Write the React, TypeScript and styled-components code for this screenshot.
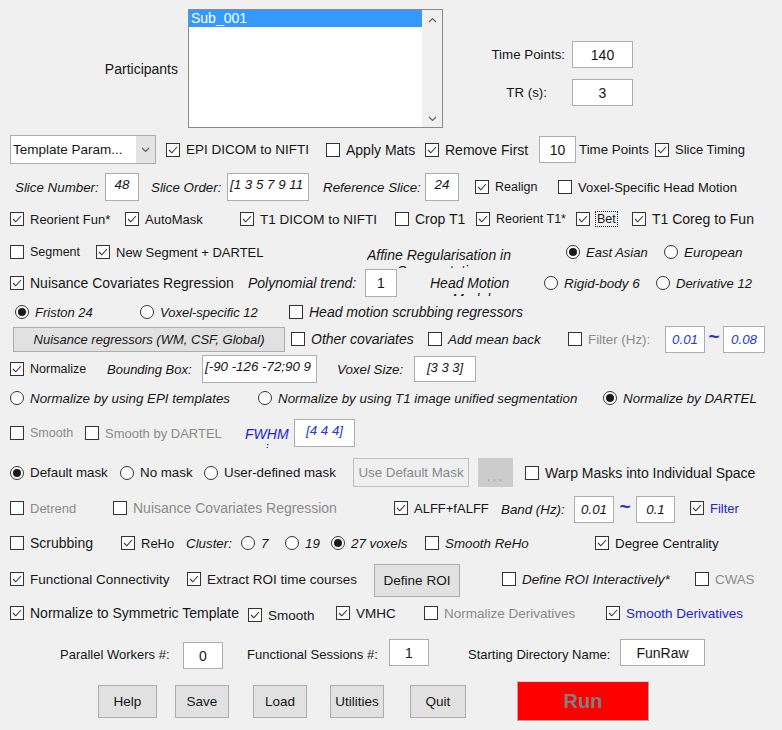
import React from "react";
import styled, { createGlobalStyle } from "styled-components";

const GlobalStyle = createGlobalStyle`
  html, body {
    margin: 0;
    padding: 0;
    background: #f0f0f0;
  }
  body {
    font-family: "Liberation Sans", Arial, sans-serif;
  }
`;

type Tone = "ink" | "muted" | "blue";
const ink: Record<Tone, string> = {
  ink: "#161616",
  muted: "#8a8a8a",
  blue: "#2222d2",
};

const Window = styled.div`
  width: 782px;
  height: 730px;
  overflow: hidden;
  background: #f0f0f0;
  color: #161616;
  font-size: 13.33px;
`;

/* ---------- top block: participants list + time parameters ---------- */

const TopBlock = styled.div`
  display: flex;
  height: 135px;
  box-sizing: border-box;
  padding-top: 9px;
`;

const ParticipantsTag = styled.div`
  width: 188px;
  height: 119px;
  box-sizing: border-box;
  padding-right: 10px;
  display: flex;
  align-items: center;
  justify-content: flex-end;
  font-size: 14px;
`;

const ListBox = styled.div`
  width: 255px;
  height: 119px;
  box-sizing: border-box;
  border: 1px solid #8a8a8a;
  background: #fff;
  display: flex;
`;

const ListItems = styled.div`
  flex: 1;
`;

const ListItem = styled.div<{ $sel?: boolean }>`
  height: 17px;
  line-height: 17px;
  padding-left: 2px;
  font-size: 14px;
  background: ${({ $sel }) => ($sel ? "#3399ff" : "transparent")};
  color: ${({ $sel }) => ($sel ? "#fff" : "#161616")};
`;

const ScrollTrack = styled.div`
  width: 20px;
  background: #f0f0f0;
  display: flex;
  flex-direction: column;
  justify-content: space-between;
  align-items: center;
  padding: 7px 0 5px;
`;

const Params = styled.div`
  display: flex;
  flex-direction: column;
  gap: 11px;
  margin-top: 32px;
`;

const ParamRow = styled.div`
  display: flex;
  align-items: center;
  height: 27px;
`;

const ParamLabel = styled.div<{ $pr: number }>`
  width: 129px;
  box-sizing: border-box;
  padding-right: ${({ $pr }) => $pr}px;
  text-align: right;
  font-size: 13.33px;
`;

/* ---------- generic rows ---------- */

const Row = styled.div<{ $h: number; $mt?: number; $pl?: number }>`
  display: flex;
  align-items: center;
  height: ${({ $h }) => $h}px;
  margin-top: ${({ $mt }) => $mt ?? 0}px;
  padding-left: ${({ $pl }) => $pl ?? 10}px;
`;

const Cell = styled.div<{ $w: number; $dy?: number }>`
  flex: none;
  width: ${({ $w }) => $w}px;
  display: flex;
  align-items: center;
  margin-top: ${({ $dy }) => ($dy ?? 0) * 2}px;
`;

const Caption = styled.span<{
  $w?: number;
  $italic?: boolean;
  $tone?: Tone;
  $size?: number;
}>`
  flex: none;
  width: ${({ $w }) => ($w ? `${$w}px` : "auto")};
  white-space: nowrap;
  color: ${({ $tone }) => ink[$tone ?? "ink"]};
  font-size: ${({ $size }) => $size ?? 13.33}px;
  font-style: ${({ $italic }) => ($italic ? "italic" : "normal")};
`;

/* labels whose second line is cut by the control's height */
const Clipped = styled.div<{ $w: number; $h: number; $mt: number; $tone?: Tone; $size?: number }>`
  flex: none;
  align-self: flex-start;
  width: ${({ $w }) => $w}px;
  height: ${({ $h }) => $h}px;
  margin-top: ${({ $mt }) => $mt}px;
  overflow: hidden;
  line-height: 16px;
  white-space: nowrap;
  font-style: italic;
  font-size: ${({ $size }) => $size ?? 14}px;
  color: ${({ $tone }) => ink[$tone ?? "ink"]};
`;

const ClipLine = styled.div<{ $indent?: number }>`
  padding-left: ${({ $indent }) => $indent ?? 0}px;
`;

const Option = styled.div<{
  $w?: number;
  $tone: Tone;
  $italic?: boolean;
  $size: number;
  $dy: number;
}>`
  flex: none;
  display: flex;
  align-items: center;
  gap: 6px;
  width: ${({ $w }) => ($w ? `${$w}px` : "auto")};
  margin-top: ${({ $dy }) => $dy * 2}px;
  color: ${({ $tone }) => ink[$tone]};
  font-size: ${({ $size }) => $size}px;
  font-style: ${({ $italic }) => ($italic ? "italic" : "normal")};
  white-space: nowrap;
`;

const Mark = styled.span<{ $round?: boolean }>`
  flex: none;
  box-sizing: border-box;
  width: 14px;
  height: 14px;
  background: #fff;
  border: 1px solid #333;
  border-radius: ${({ $round }) => ($round ? "50%" : "0")};
  display: flex;
  align-items: center;
  justify-content: center;
`;

const Dot = styled.span`
  width: 8px;
  height: 8px;
  border-radius: 50%;
  background: #1a1a1a;
`;

const Focus = styled.span`
  outline: 1px dotted #222;
  outline-offset: 0;
  padding: 0 1px;
`;

const Field = styled.div<{
  $w: number;
  $h?: number;
  $italic?: boolean;
  $blue?: boolean;
  $left?: boolean;
  $top?: boolean;
  $size?: number;
}>`
  flex: none;
  box-sizing: border-box;
  width: ${({ $w }) => $w}px;
  height: ${({ $h }) => $h ?? 27}px;
  display: flex;
  align-items: ${({ $top }) => ($top ? "flex-start" : "center")};
  justify-content: ${({ $left }) => ($left ? "flex-start" : "center")};
  padding: ${({ $top }) => ($top ? "3px 2px 0" : "0 2px")};
  background: #fff;
  border: 1px solid #adadad;
  color: ${({ $blue }) => ($blue ? "#2238d8" : "#161616")};
  font-size: ${({ $size }) => $size ?? 14}px;
  font-style: ${({ $italic }) => ($italic ? "italic" : "normal")};
  white-space: nowrap;
  overflow: hidden;
`;

const Tilde = styled.span<{ $w: number }>`
  flex: none;
  width: ${({ $w }) => $w}px;
  text-align: center;
  color: #1f2fd0;
  font-size: 19px;
  font-weight: bold;
  line-height: 1;
  margin-top: -6px;
`;

const Select = styled.div`
  flex: none;
  box-sizing: border-box;
  width: 146px;
  height: 29px;
  display: flex;
  background: #fff;
  border: 1px solid #acacac;
  font-size: 13.5px;
`;

const SelectValue = styled.div`
  flex: 1;
  display: flex;
  align-items: center;
  padding-left: 2px;
  white-space: nowrap;
`;

const SelectArrow = styled.div`
  width: 19px;
  background: #e3e3e3;
  display: flex;
  align-items: center;
  justify-content: center;
`;

const Button = styled.button<{
  $w: number;
  $h: number;
  $italic?: boolean;
  $size?: number;
  $off?: boolean;
}>`
  flex: none;
  box-sizing: border-box;
  width: ${({ $w }) => $w}px;
  height: ${({ $h }) => $h}px;
  margin: 0;
  padding: 0;
  background: ${({ $off }) => ($off ? "#efefef" : "#e1e1e1")};
  border: 1px solid ${({ $off }) => ($off ? "#bfbfbf" : "#adadad")};
  color: ${({ $off }) => ($off ? "#8a8a8a" : "#161616")};
  font-family: inherit;
  font-size: ${({ $size }) => $size ?? 13.5}px;
  font-style: ${({ $italic }) => ($italic ? "italic" : "normal")};
  white-space: nowrap;
`;

const MoreButton = styled.button`
  flex: none;
  box-sizing: border-box;
  width: 35px;
  height: 29px;
  margin: 0;
  padding: 0 0 3px;
  background: #cccccc;
  border: none;
  color: #a3a3a3;
  font-family: inherit;
  font-size: 14px;
  letter-spacing: 2px;
  display: flex;
  align-items: flex-end;
  justify-content: center;
`;

const RunButton = styled.button`
  flex: none;
  box-sizing: border-box;
  width: 132px;
  height: 40px;
  margin: 0;
  padding: 0;
  background: #ff0000;
  border: 1px solid #a8a8a8;
  border-top-color: #d8d8d8;
  color: #7f7f7f;
  font-family: inherit;
  font-size: 20px;
  font-weight: bold;
`;

/* ---------- small drawings ---------- */

const Tick = () => (
  <svg width="12" height="12" viewBox="0 0 12 12">
    <polyline points="2,6 4.8,8.8 10,3" fill="none" stroke="#333" strokeWidth="1.1" />
  </svg>
);

const Chevron = ({ up }: { up?: boolean }) => (
  <svg width="9" height="6" viewBox="0 0 9 6">
    <polyline
      points={up ? "1,5 4.5,1.5 8,5" : "1,1 4.5,4.5 8,1"}
      fill="none"
      stroke="#606060"
      strokeWidth="1.2"
    />
  </svg>
);

type OptProps = {
  label: React.ReactNode;
  on?: boolean;
  w?: number;
  tone?: Tone;
  italic?: boolean;
  size?: number;
  dy?: number;
};

const Check = ({ label, on, w, tone = "ink", italic, size = 13.33, dy = 0 }: OptProps) => (
  <Option $w={w} $tone={tone} $italic={italic} $size={size} $dy={dy}>
    <Mark>{on && <Tick />}</Mark>
    <span>{label}</span>
  </Option>
);

const Radio = ({ label, on, w, tone = "ink", italic, size = 13.33, dy = 0 }: OptProps) => (
  <Option $w={w} $tone={tone} $italic={italic} $size={size} $dy={dy}>
    <Mark $round>{on && <Dot />}</Mark>
    <span>{label}</span>
  </Option>
);

export default function App() {
  return (
    <Window>
      <GlobalStyle />

      <TopBlock>
        <ParticipantsTag>Participants</ParticipantsTag>
        <ListBox>
          <ListItems>
            <ListItem $sel>Sub_001</ListItem>
          </ListItems>
          <ScrollTrack>
            <Chevron up />
            <Chevron />
          </ScrollTrack>
        </ListBox>
        <Params>
          <ParamRow>
            <ParamLabel $pr={7}>Time Points:</ParamLabel>
            <Field $w={61}>140</Field>
          </ParamRow>
          <ParamRow>
            <ParamLabel $pr={25}>TR (s):</ParamLabel>
            <Field $w={61}>3</Field>
          </ParamRow>
        </Params>
      </TopBlock>

      <Row $h={29} $pl={10}>
        <Cell $w={156}>
          <Select>
            <SelectValue>Template Param...</SelectValue>
            <SelectArrow>
              <Chevron />
            </SelectArrow>
          </Select>
        </Cell>
        <Check w={160} on label="EPI DICOM to NIFTI" size={13.5} />
        <Check w={99} label="Apply Mats" size={14} />
        <Check w={114} on label="Remove First" size={14} />
        <Cell $w={40}>
          <Field $w={37}>10</Field>
        </Cell>
        <Caption $w={76}>Time Points</Caption>
        <Check on label="Slice Timing" size={13} />
      </Row>

      <Row $h={28} $mt={9} $pl={15}>
        <Caption $w={90} $italic>Slice Number:</Caption>
        <Cell $w={46}>
          <Field $w={34} $h={28} $italic $top $size={13.33}>48</Field>
        </Cell>
        <Caption $w={76} $italic>Slice Order:</Caption>
        <Cell $w={96}>
          <Field $w={82} $h={28} $italic $top $left $size={13.33}>[1 3 5 7 9 11</Field>
        </Cell>
        <Caption $w={102} $italic>Reference Slice:</Caption>
        <Cell $w={50}>
          <Field $w={34} $h={28} $italic $top $size={13.33}>24</Field>
        </Cell>
        <Check w={83} on label="Realign" size={12.5} />
        <Check label="Voxel-Specific Head Motion" size={13} />
      </Row>

      <Row $h={20} $mt={8} $pl={10}>
        <Check w={115} on label="Reorient Fun*" size={13} />
        <Check w={115} on label="AutoMask" size={13} />
        <Check w={155} on label="T1 DICOM to NIFTI" size={13.5} />
        <Check w={81} label="Crop T1" size={14} />
        <Check w={100} on label="Reorient T1*" size={12.5} />
        <Check w={56} on label={<Focus>Bet</Focus>} size={12.5} />
        <Check on label="T1 Coreg to Fun" size={14} />
      </Row>

      <Row $h={20} $mt={13} $pl={10}>
        <Check w={86} label="Segment" size={12.5} />
        <Check w={271} on label="New Segment + DARTEL" size={13} />
        <Clipped $w={199} $h={21} $mt={5}>
          <ClipLine>Affine Regularisation in</ClipLine>
          <ClipLine $indent={30}>Segmentation:</ClipLine>
        </Clipped>
        <Radio w={98} on italic label="East Asian" size={13} />
        <Radio italic label="European" size={13.5} />
      </Row>

      <Row $h={28} $mt={7} $pl={10}>
        <Check w={238} on label="Nuisance Covariates Regression" size={14} />
        <Caption $w={117} $italic $size={14}>Polynomial trend:</Caption>
        <Cell $w={65}>
          <Field $w={32} $h={28}>1</Field>
        </Cell>
        <Clipped $w={114} $h={21} $mt={6}>
          <ClipLine>Head Motion</ClipLine>
          <ClipLine $indent={22}>Model:</ClipLine>
        </Clipped>
        <Radio w={112} italic label="Rigid-body 6" size={13.5} />
        <Radio italic label="Derivative 12" size={13} />
      </Row>

      <Row $h={20} $mt={5} $pl={15}>
        <Radio w={125} on italic label="Friston 24" size={13} />
        <Radio w={149} italic label="Voxel-specific 12" size={13} />
        <Check italic label="Head motion scrubbing regressors" size={14} />
      </Row>

      <Row $h={28} $mt={3} $pl={13}>
        <Cell $w={278}>
          <Button $w={272} $h={25} $italic $size={13}>
            Nuisance regressors (WM, CSF, Global)
          </Button>
        </Cell>
        <Check w={137} italic label="Other covariates" size={14} />
        <Check w={140} italic label="Add mean back" size={13.33} />
        <Check w={97} tone="muted" label="Filter (Hz):" size={13.33} />
        <Field $w={40} $blue $italic $size={13.33}>0.01</Field>
        <Tilde $w={18}>~</Tilde>
        <Field $w={42} $blue $italic $size={13.33}>0.08</Field>
      </Row>

      <Row $h={28} $mt={2} $pl={10}>
        <Check w={97} on label="Normalize" size={12.5} />
        <Caption $w={95} $italic $size={13}>Bounding Box:</Caption>
        <Cell $w={135}>
          <Field $w={115} $h={28} $italic $left $top $size={13.33}>[-90 -126 -72;90 9</Field>
        </Cell>
        <Caption $w={77} $italic>Voxel Size:</Caption>
        <Field $w={62} $h={26} $italic $top $size={13}>[3 3 3]</Field>
      </Row>

      <Row $h={20} $mt={5} $pl={10}>
        <Radio w={248} italic label="Normalize by using EPI templates" />
        <Radio w={345} italic label="Normalize by using T1 image unified segmentation" />
        <Radio on italic label="Normalize by DARTEL" />
      </Row>

      <Row $h={28} $mt={11} $pl={10}>
        <Check w={75} tone="muted" label="Smooth" size={12.5} />
        <Check w={160} tone="muted" label="Smooth by DARTEL" size={13} />
        <Clipped $w={49} $h={22} $mt={7} $tone="blue">
          <ClipLine>FWHM</ClipLine>
          <ClipLine $indent={20}>i</ClipLine>
        </Clipped>
        <Field $w={61} $h={28} $blue $italic $top $size={13.33}>[4 4 4]</Field>
      </Row>

      <Row $h={29} $mt={11} $pl={10}>
        <Radio w={110} on label="Default mask" />
        <Radio w={84} label="No mask" />
        <Radio w={149} label="User-defined mask" />
        <Cell $w={125}>
          <Button $w={116} $h={29} $off $size={13.33}>Use Default Mask</Button>
        </Cell>
        <Cell $w={47}>
          <MoreButton>...</MoreButton>
        </Cell>
        <Check label="Warp Masks into Individual Space" size={14} />
      </Row>

      <Row $h={28} $mt={8} $pl={10}>
        <Check w={103} tone="muted" label="Detrend" size={13} dy={-1} />
        <Check w={281} tone="muted" label="Nuisance Covariates Regression" size={14} dy={-1} />
        <Check w={107} on label="ALFF+fALFF" size={13} dy={-1} />
        <Caption $w={73} $italic>Band (Hz):</Caption>
        <Field $w={40} $italic $size={13.33}>0.01</Field>
        <Tilde $w={22}>~</Tilde>
        <Cell $w={54}>
          <Field $w={39} $italic $size={13.33}>0.1</Field>
        </Cell>
        <Check on tone="blue" label="Filter" size={13} dy={-1} />
      </Row>

      <Row $h={20} $mt={10} $pl={10}>
        <Check w={111} label="Scrubbing" size={14} />
        <Check w={65} on label="ReHo" size={13} />
        <Caption $w={55} $italic>Cluster:</Caption>
        <Radio w={44} italic label="7" />
        <Radio w={46} italic label="19" />
        <Radio w={94} on italic label="27 voxels" />
        <Check w={170} italic label="Smooth ReHo" />
        <Check on label="Degree Centrality" />
      </Row>

      <Row $h={34} $mt={10} $pl={10}>
        <Check w={177} on label="Functional Connectivity" size={13.5} dy={-1} />
        <Check w={187} on label="Extract ROI time courses" size={13.5} dy={-1} />
        <Cell $w={128}>
          <Button $w={86} $h={33}>Define ROI</Button>
        </Cell>
        <Check w={193} italic label="Define ROI Interactively*" size={13.5} dy={-1} />
        <Check tone="muted" label="CWAS" dy={-1} />
      </Row>

      <Row $h={20} $mt={6} $pl={10}>
        <Check w={238} on label="Normalize to Symmetric Template" size={14} />
        <Check w={88} on label="Smooth" size={13.5} dy={2} />
        <Check w={88} on label="VMHC" size={13.5} />
        <Check w={182} tone="muted" label="Normalize Derivatives" size={13.5} />
        <Check on tone="blue" label="Smooth Derivatives" size={13.5} />
      </Row>

      <Row $h={30} $mt={16} $pl={60}>
        <Caption $w={123} $size={13}>Parallel Workers #:</Caption>
        <Cell $w={64} $dy={1.5}>
          <Field $w={40}>0</Field>
        </Cell>
        <Caption $w={142} $size={13}>Functional Sessions #:</Caption>
        <Cell $w={79} $dy={-1.5}>
          <Field $w={40}>1</Field>
        </Cell>
        <Caption $w={152} $size={13}>Starting Directory Name:</Caption>
        <Cell $w={85} $dy={-1.5}>
          <Field $w={85}>FunRaw</Field>
        </Cell>
      </Row>

      <Row $h={40} $mt={12} $pl={98}>
        <Cell $w={77}>
          <Button $w={59} $h={33}>Help</Button>
        </Cell>
        <Cell $w={78}>
          <Button $w={54} $h={33}>Save</Button>
        </Cell>
        <Cell $w={77}>
          <Button $w={54} $h={33}>Load</Button>
        </Cell>
        <Cell $w={80}>
          <Button $w={54} $h={33}>Utilities</Button>
        </Cell>
        <Cell $w={107}>
          <Button $w={56} $h={33}>Quit</Button>
        </Cell>
        <RunButton>Run</RunButton>
      </Row>
    </Window>
  );
}
